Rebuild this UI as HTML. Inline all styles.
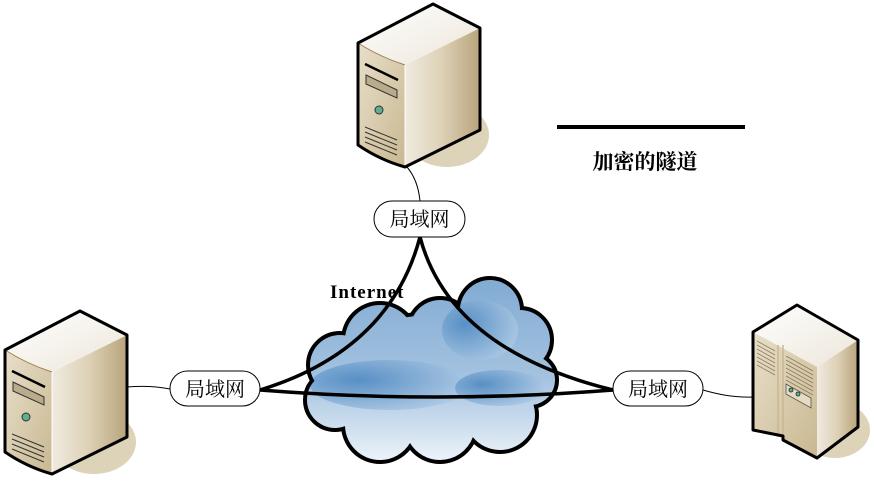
<!DOCTYPE html>
<html><head><meta charset="utf-8"><style>
html,body{margin:0;padding:0;background:#fff;}
svg{display:block}
text{font-family:"Liberation Serif","Noto Serif CJK SC",serif;}
</style></head><body>
<svg width="874" height="503" viewBox="0 0 874 503">
<defs>
<linearGradient id="side" x1="0" y1="0" x2="1" y2="0">
<stop offset="0" stop-color="#f0ebe0"/><stop offset="0.5" stop-color="#ddd0b5"/><stop offset="1" stop-color="#b8a47c"/></linearGradient>
<linearGradient id="front" x1="0" y1="0" x2="1" y2="1">
<stop offset="0" stop-color="#e8dfca"/><stop offset="1" stop-color="#c9b891"/></linearGradient>
<linearGradient id="topf" x1="0" y1="0" x2="1" y2="1">
<stop offset="0" stop-color="#ffffff"/><stop offset="1" stop-color="#ece6da"/></linearGradient>
<linearGradient id="cloud" x1="0" y1="0" x2="0" y2="1">
<stop offset="0" stop-color="#7ea9d2"/><stop offset="0.55" stop-color="#a5c3e0"/><stop offset="1" stop-color="#f4f8fc"/></linearGradient>
<radialGradient id="puff" cx="0.3" cy="0.4" r="0.8">
<stop offset="0" stop-color="#4a86c0"/><stop offset="1" stop-color="#b7d0e8"/></radialGradient>
<g id="srv">
<ellipse cx="447" cy="135" rx="42" ry="32" fill="#ddd3b8"/>
<path d="M405,65 L480,28 L480,130 L405,167 Z" fill="url(#side)"/>
<path d="M358,43 L433,4 L480,28 L405,65 Q380,57 358,43 Z" fill="url(#topf)"/>
<path d="M358,43 Q380,57 405,65 L405,167 Q380,160 358,145 Z" fill="url(#front)"/>
<path d="M358,43 Q380,57 405,65" stroke="#a08050" stroke-width="1" fill="none"/>
<path d="M405,65 L405,167" stroke="#fff" stroke-width="1"/>
<path d="M365,64 L398,80" stroke="#000" stroke-width="2.5"/>
<path d="M366,75 L397,90 L397,98 L366,84 Z" fill="#b9ab8b" stroke="#333" stroke-width="1"/>
<circle cx="379" cy="110" r="4" fill="#5fae8f" stroke="#333" stroke-width="1"/>
<path d="M365,127 L397,140 M365,132 L397,145 M365,137 L397,150 M365,142 L397,155" stroke="#333" stroke-width="1"/>
<path d="M358,43 L433,4 L480,28 L480,130 L405,167 Q380,160 358,145 Z" fill="none" stroke="#000" stroke-width="3" stroke-linejoin="round"/>
</g>
<g id="cshape">
<circle cx="340" cy="365" r="30"/><circle cx="380" cy="340" r="35"/><circle cx="440" cy="330" r="30"/>
<circle cx="490" cy="310" r="30"/><circle cx="520" cy="340" r="30"/><circle cx="530" cy="380" r="25"/>
<circle cx="500" cy="415" r="35"/><circle cx="440" cy="425" r="35"/><circle cx="380" cy="425" r="35"/>
<circle cx="335" cy="400" r="28"/><ellipse cx="435" cy="375" rx="105" ry="60"/>
</g>
<clipPath id="cc">
<circle cx="340" cy="365" r="30"/><circle cx="380" cy="340" r="35"/><circle cx="440" cy="330" r="30"/>
<circle cx="490" cy="310" r="30"/><circle cx="520" cy="340" r="30"/><circle cx="530" cy="380" r="25"/>
<circle cx="500" cy="415" r="35"/><circle cx="440" cy="425" r="35"/><circle cx="380" cy="425" r="35"/>
<circle cx="335" cy="400" r="28"/><ellipse cx="435" cy="375" rx="105" ry="60"/>
</clipPath>
</defs>

<path d="M407,167 Q418,180 420,201" stroke="#000" stroke-width="1" fill="none"/>
<path d="M127,387 Q150,385 170,389" stroke="#000" stroke-width="1" fill="none"/>
<path d="M703,390 Q730,398 753,397" stroke="#000" stroke-width="1" fill="none"/>

<use href="#srv"/>
<use href="#srv" transform="translate(-353,307)"/>

<ellipse cx="835" cy="430" rx="35" ry="28" fill="#ddd3b8"/>
<path d="M817,367 L858,340 L858,427 L817,458 Z" fill="url(#side)"/>
<path d="M753,332 L797,305 L858,340 L817,367 Z" fill="url(#topf)"/>
<path d="M753,332 L817,367 L817,458 L783,440 L783,436 L753,430 Z" fill="url(#front)"/>
<path d="M778,345 L778,437 M783,345 L783,440" stroke="#c8b890" stroke-width="1.5"/>
<path d="M757,341 L775,351 M757,345 L775,355 M757,349 L775,359 M757,353 L775,363 M757,357 L775,367 M757,361 L775,371 M757,365 L775,375 M786,356 L813,371 M786,360 L813,375 M786,364 L813,379 M786,368 L813,383 M786,372 L813,387 M786,376 L813,391 M786,380 L813,395" stroke="#8a7a5a" stroke-width="0.8"/>
<path d="M786,384 L811,398 L811,408 L786,394 Z" fill="#e5dac2" stroke="#555" stroke-width="0.8"/>
<circle cx="791" cy="390" r="2" fill="#5fae8f" stroke="#222" stroke-width="0.8"/>
<circle cx="798" cy="394" r="2" fill="#5fae8f" stroke="#222" stroke-width="0.8"/>
<path d="M753,332 L797,305 L858,340 L858,427 L817,458 L783,440 L783,436 L753,430 Z" fill="none" stroke="#000" stroke-width="3" stroke-linejoin="round"/>

<use href="#cshape" stroke="#000" stroke-width="8" fill="#000"/>
<g clip-path="url(#cc)">
<rect x="290" y="270" width="280" height="200" fill="url(#cloud)"/>
<ellipse cx="480" cy="330" rx="38" ry="30" fill="url(#puff)" opacity="0.8"/>
<ellipse cx="390" cy="385" rx="80" ry="25" fill="url(#puff)" opacity="0.85"/>
<ellipse cx="500" cy="388" rx="45" ry="18" fill="url(#puff)" opacity="0.85"/>
</g>

<path d="M420,237 Q390,350 260,390" stroke="#000" stroke-width="3.5" fill="none"/>
<path d="M420,237 Q450,350 613,390" stroke="#000" stroke-width="3.5" fill="none"/>
<path d="M260,390 Q436,404 613,390" stroke="#000" stroke-width="3.5" fill="none"/>

<text x="330" y="298" font-size="19" font-weight="bold" letter-spacing="1">Internet</text>

<rect x="374" y="201" width="91" height="36" rx="18" fill="#fff" stroke="#000" stroke-width="1"/>
<text x="419.5" y="226" font-size="20" text-anchor="middle">局域网</text>
<rect x="170" y="371" width="90" height="35" rx="17.5" fill="#fff" stroke="#000" stroke-width="1"/>
<text x="215" y="396" font-size="20" text-anchor="middle">局域网</text>
<rect x="613" y="371" width="90" height="35" rx="17.5" fill="#fff" stroke="#000" stroke-width="1"/>
<text x="658" y="396" font-size="20" text-anchor="middle">局域网</text>

<line x1="557" y1="127" x2="745" y2="127" stroke="#000" stroke-width="4"/>
<text x="645" y="169" font-size="21" font-weight="bold" text-anchor="middle">加密的隧道</text>
</svg>
</body></html>
